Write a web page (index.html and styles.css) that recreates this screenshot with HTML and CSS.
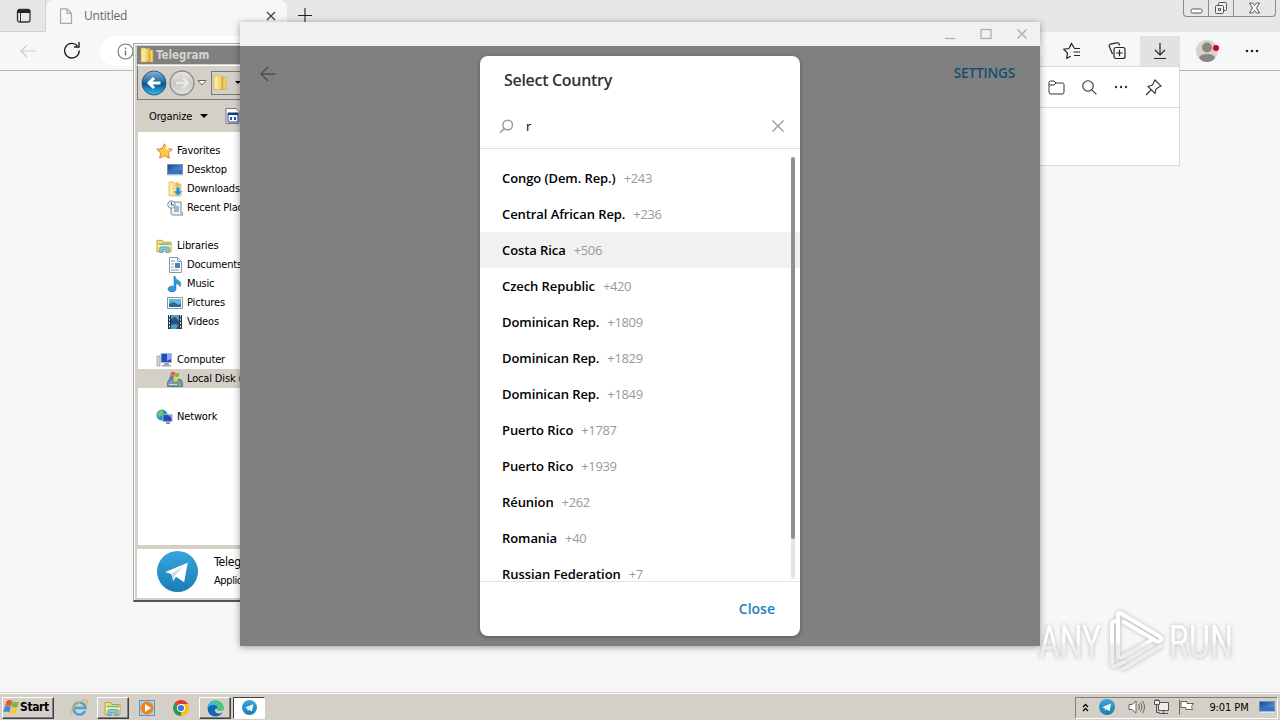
FILE: index.html
```html
<!DOCTYPE html>
<html lang="en">
<head>
    <meta charset="UTF-8">
    <meta name="viewport" content="width=device-width, initial-scale=1.0">
    <title>Untitled</title>
    <link rel="stylesheet" href="styles.css">
</head>
<body>
    <svg width="0" height="0" class="defs">
        <defs>
            <linearGradient id="blue" x1="0" y1="0" x2="0" y2="1"><stop offset="0" stop-color="#37a6dc"/><stop offset="1" stop-color="#1b7cb8"/></linearGradient>
            <linearGradient id="gold" x1="0" y1="0" x2="1" y2="0"><stop offset="0" stop-color="#f7e58c"/><stop offset="1" stop-color="#dba928"/></linearGradient>
            <linearGradient id="screen" x1="0" y1="0" x2="1" y2="1"><stop offset="0" stop-color="#163f9a"/><stop offset="1" stop-color="#6bb0ea"/></linearGradient>
            <linearGradient id="orb" x1="0" y1="0" x2="0" y2="1"><stop offset="0" stop-color="#8ab4d0"/><stop offset=".48" stop-color="#1d699f"/><stop offset=".52" stop-color="#07518b"/><stop offset="1" stop-color="#35c4f4"/></linearGradient>
            <linearGradient id="orb-off" x1="0" y1="0" x2="0" y2="1"><stop offset="0" stop-color="#e8e7e3"/><stop offset=".5" stop-color="#c9c8c4"/><stop offset="1" stop-color="#e4e3df"/></linearGradient>
            <linearGradient id="mark" gradientUnits="userSpaceOnUse" x1="0" y1="0" x2="0" y2="68"><stop offset=".5" stop-color="#fff"/><stop offset=".58" stop-color="#ededed"/></linearGradient>
            <symbol id="telegram" viewBox="0 0 40 40">
                <circle cx="20" cy="20" r="20" fill="url(#blue)"/>
                <path d="M8 20.500 30 11.500 26.500 30.500 18.500 25 16 29.500 14 22.500Z" fill="#fff"/>
                <path d="m14 22.500 12-8-8.500 9.500-1.500 5.500Z" fill="#c5deec"/>
            </symbol>
            <symbol id="folder" viewBox="0 0 16 16">
                <path d="M2 1h5v14H2z" fill="#f8e99b" stroke="#d0a93c" stroke-width=".6"/>
                <path d="M7 2 11 1v13l-4 1z" fill="url(#gold)"/>
                <path d="M11 3h3v12H8l3-1z" fill="#f1d566" stroke="#c99a25" stroke-width=".5"/>
            </symbol>
            <symbol id="library" viewBox="0 0 18 16">
                <path d="M1 2h6l1 2h8v10H1z" fill="#f4df7f" stroke="#c6a23d"/>
                <path d="M3 5h12v4H3z" fill="#76c796"/><path d="M2 7h14v2H2z" fill="#fff3ae"/>
                <path d="M4 15v-4q0-2 2-2h6q2 0 2 2v4h-3v-3H7v3z" fill="#83c9e8" stroke="#458eb3" stroke-width=".7"/>
            </symbol>
            <symbol id="monitor" viewBox="0 0 16 14">
                <path d="M.5 1.500h15v10H.5z" fill="url(#screen)" stroke="#7592ad"/>
                <path d="M1 10q7-4 14-3v4H1z" fill="#3772bd"/><path d="M1 11.500h14V13H1z" fill="#d6e8f5"/>
            </symbol>
            <symbol id="windows" viewBox="0 0 16 16">
                <path d="M3 2q3-2 6 0L7.500 7.500q-3-2-6 0z" fill="#e8592b"/><path d="M9.500 2.500q3 1.500 6 0L14 8q-3 1.500-6-.5z" fill="#80b936"/>
                <path d="M1.200 8q3-2 6 0L5.700 13.500q-3-2-6 0z" fill="#4486d5"/><path d="M7.700 8.500q3 2 6 .5l-1.500 5.500q-3 1.500-6-.5z" fill="#f7ca35"/>
            </symbol>
        </defs>
    </svg>

    <main class="browser">
        <div class="tab-bar">
            <div class="tab-actions">
                <svg width="16" height="16" viewBox="0 0 16 16"><rect x="1.500" y="1.500" width="12.500" height="12.500" rx="2" fill="none" stroke="#333" stroke-width="1.300"/><path d="M1.500 3.500h12.500" stroke="#222" stroke-width="3"/><path d="M4.500 5v9" stroke="#333"/></svg>
            </div>
            <div class="tab">
                <svg width="14" height="16" viewBox="0 0 14 16"><path d="M1.500.8h6.500l4.500 4.500v10H1.500zM8 .8v4.500h4.500" fill="none" stroke="#aaa" stroke-width="1.200"/></svg>
                <span>Untitled</span>
                <svg class="tab-close" width="10" height="10" viewBox="0 0 10 10"><path d="m1 1 8 8m0-8L1 9" stroke="#444" stroke-width="1.400"/></svg>
            </div>
            <svg class="new-tab" width="14" height="14" viewBox="0 0 14 14"><path d="M7 0v14M0 7.500h14" stroke="#222" stroke-width="1.100"/></svg>
            <div class="caption-buttons">
                <span><svg width="13" height="6" viewBox="0 0 13 6"><rect x="1" y="1" width="11" height="4" rx="1.500" fill="#fff" stroke="#555"/></svg></span>
                <span><svg width="14" height="14" viewBox="0 0 14 14" fill="#eee" stroke="#555"><rect x="4.500" y="1.500" width="8" height="8" rx="1"/><rect x="1.500" y="4.500" width="8" height="8" rx="1"/><path d="M4.500 7.500h2v2h-2z"/></svg></span>
                <span><svg width="13" height="12" viewBox="0 0 13 12"><path d="M1.500 1h3l2 2.500 2-2.500h3l-3 5 3 5h-3l-2-2.500-2 2.500h-3l3-5z" fill="#fff" stroke="#555"/></svg></span>
            </div>
        </div>
        <div class="toolbar">
            <svg class="back" width="18" height="14" viewBox="0 0 18 14"><path d="M17 7H2M8 1 2 7l6 6" fill="none" stroke="#ccc" stroke-width="1.200"/></svg>
            <svg class="reload" width="18" height="18" viewBox="0 0 18 18"><path d="M16.200 8.500A7.300 7.300 0 1 1 14.500 4M16 0v5h-5" fill="none" stroke="#222" stroke-width="1.400"/></svg>
            <div class="address">
                <svg width="17" height="17" viewBox="0 0 17 17"><circle cx="8.500" cy="8.500" r="7.500" fill="none" stroke="#777" stroke-width="1.100"/><path d="M8.500 7.500v5M8.500 4.500v1.500" stroke="#666" stroke-width="1.300"/></svg>
            </div>
            <div class="tools">
                <span><svg width="18" height="18" viewBox="0 0 18 18" fill="none" stroke="#222" stroke-width="1.200"><path d="M11.500 6.500 8.500 1.500 6 6.500.8 7.200l3.700 4-.7 5 4-2M11.500 6.500H17M10.500 10H17M11 13.500h6"/></svg></span>
                <span><svg width="18" height="18" viewBox="0 0 18 18" fill="none" stroke="#222" stroke-width="1.200"><path d="M4.500 12 1.200 4.200q-.4-1.500 1-2L9 .8q1.500-.3 2 1l.5 1.700"/><rect x="6" y="5.500" width="11" height="11" rx="2"/><path d="M11.500 7.800v6.400M8.300 11h6.400"/></svg></span>
                <span class="active"><svg width="14" height="18" viewBox="0 0 14 18" fill="none" stroke="#222" stroke-width="1.200"><path d="M7 1v12M2 8l5 5 5-5M1 16.500h12"/></svg></span>
                <span><svg width="24" height="24" viewBox="0 0 24 24"><circle cx="12" cy="12" r="11" fill="#d6d3d1"/><circle cx="12" cy="8.500" r="5" fill="#8a8785"/><path d="M4 19q1-4 8-4t8 4q-3 4-8 4t-8-4" fill="#8a8785"/><circle cx="21" cy="9" r="3" fill="#d7000f"/></svg></span>
                <span><svg width="14" height="4" viewBox="0 0 14 4" fill="#222"><circle cx="2" cy="2" r="1.300"/><circle cx="7" cy="2" r="1.300"/><circle cx="12" cy="2" r="1.300"/></svg></span>
            </div>
        </div>
    </main>

    <section class="downloads">
        <div class="downloads-bar">
            <svg width="17" height="15" viewBox="0 0 17 15" fill="none" stroke="#333"><path d="M1 12V2.500Q1 1 2.500 1H6l2 2h6.500Q16 3 16 4.500V12q0 2-2 2H3q-2 0-2-2ZM1 5h5l2-2"/></svg>
            <svg width="15" height="15" viewBox="0 0 15 15" fill="none" stroke="#333" stroke-width="1.100"><circle cx="6" cy="6" r="5.200"/><path d="m9.800 9.800 4.600 4.600"/></svg>
            <svg width="14" height="4" viewBox="0 0 14 4" fill="#333"><circle cx="2" cy="2" r="1.200"/><circle cx="7" cy="2" r="1.200"/><circle cx="12" cy="2" r="1.200"/></svg>
            <svg width="17" height="17" viewBox="0 0 17 17" fill="none" stroke="#333" stroke-width="1.100"><path d="m10 1 6 6-2 1-3 2-1 4.500L3 7.500 7.500 6 9 3ZM6 11l-5 5"/></svg>
        </div>
    </section>

    <section class="explorer">
        <div class="explorer-title"><svg width="16" height="16"><use href="#folder"/></svg>Telegram</div>
        <div class="explorer-nav">
            <svg width="26" height="26" viewBox="0 0 26 26"><circle cx="13" cy="13" r="12" fill="url(#orb)" stroke="#345b75"/><path d="M19.500 13H8m5-5-5 5 5 5" fill="none" stroke="#fff" stroke-width="3"/></svg>
            <svg width="26" height="26" viewBox="0 0 26 26"><circle cx="13" cy="13" r="12" fill="url(#orb-off)" stroke="#8d8d8a" stroke-width="1.300"/><path d="M7 13h12m-5-5 5 5-5 5" fill="none" stroke="#e9e8e5" stroke-width="2.500"/></svg>
            <svg class="nav-drop" width="10" height="6" viewBox="0 0 10 6"><path d="M1 .5h8l-4 4.500z" fill="#fff" stroke="#666"/></svg>
            <div class="path"><svg width="16" height="17"><use href="#folder"/></svg><i class="caret"></i></div>
        </div>
        <div class="explorer-tools">
            <span>Organize</span><i class="caret"></i>
            <svg width="15" height="16" viewBox="0 0 15 16"><path d="M1 .5h10l3 3v12H1z" fill="#fff" stroke="#777"/><path d="M3 5h10v9H3z" fill="#fff" stroke="#113d86"/><path d="M3 5h10v2H3z" fill="#113d86"/><path d="M5 9h2v3H5zM9 9h2v3H9z" fill="#24539b"/></svg>
        </div>
        <div class="tree">
            <div class="node"><svg width="17" height="16" viewBox="0 0 17 16"><path d="m8.500.8 2.400 4.700 5.400.8-4 3.700 1 5.200-4.800-2.500-4.800 2.500 1-5.200-4-3.700 5.400-.8z" fill="#ffc94a" stroke="#dc842a"/><path d="m8.500 3 1.300 3.800H14" fill="#fff4bd"/></svg>Favorites</div>
            <div class="node sub"><svg width="16" height="14"><use href="#monitor"/></svg>Desktop</div>
            <div class="node sub"><svg width="16" height="16" viewBox="0 0 16 16"><use href="#folder"/><path d="M9 6h4v4h3l-5 5-5-5h3z" fill="#2d91d6" stroke="#fff" stroke-width=".5"/></svg>Downloads</div>
            <div class="node sub"><svg width="16" height="16" viewBox="0 0 16 16"><path d="M4 2h10v11h2v2H6q-2 0-2-2z" fill="#edf4f7" stroke="#75899b"/><path d="M7 7h5M7 9h5M7 11h5" stroke="#577e98"/><circle cx="4.500" cy="4.500" r="3.800" fill="#e6f2f6" stroke="#8198a7"/><path d="M4.500 2v3H7" fill="none" stroke="#557"/></svg>Recent Places</div>
            <div class="node group"><svg width="17" height="16"><use href="#library"/></svg>Libraries</div>
            <div class="node sub"><svg width="16" height="16" viewBox="0 0 16 16"><path d="M2.500.5h8l4 4v11h-12z" fill="#fff" stroke="#8596a8"/><path d="M10.500.5v4h4M4 4h4M4 7h3M4 10h3M4 13h8" fill="none" stroke="#789ac1"/><path d="M8 6h5v5H8z" fill="#4f7db3"/></svg>Documents</div>
            <div class="node sub"><svg width="16" height="16" viewBox="0 0 16 16"><path d="M8 0q0 3 3.500 4.500T13 11q0-3-4-3.500V13a4 3 0 1 1-2-2.500V0z" fill="#2f97da" stroke="#1b6faf" stroke-width=".5"/></svg>Music</div>
            <div class="node sub"><svg width="16" height="14" viewBox="0 0 16 14"><path d="M.5 1.500h15v11H.5z" fill="#fff" stroke="#8496a6"/><path d="M2 3h12v8H2z" fill="#65b4dc"/><path d="M2 8q4-3 7-.5T14 7v4H2z" fill="#286b8a"/></svg>Pictures</div>
            <div class="node sub"><svg width="16" height="16" viewBox="0 0 16 16"><path d="M1 1h14v14H1z" fill="#263745"/><path d="M4 1h8v6H4zM4 8h8v7H4z" fill="#5898c6"/><path d="M4 5 8 3l4 4v8H9l2-4-3-1-4 1z" fill="#28547b"/><path d="M2.500 1v14M13.500 1v14" stroke="#d6e2e8" stroke-dasharray="2 1.500"/></svg>Videos</div>
            <div class="node group"><svg width="17" height="16" viewBox="0 0 17 16"><path d="M1 4h3v10H1z" fill="#d5dbe2" stroke="#78818c" stroke-width=".6"/><path d="M5 1.500h10.500v9H5z" fill="#2548c8" stroke="#a6b4ca"/><path d="M11 2h4v5l-4 2z" fill="#81adf3"/><path d="M8 11h5v2h2v1.500H6V13h2z" fill="#9ba5b4"/></svg>Computer</div>
            <div class="node sub selected"><svg width="16" height="16" viewBox="0 0 16 16"><path d="M2 8.500h12l1.500 3v4H.5v-4z" fill="#739baa" stroke="#45606c" stroke-width=".7"/><use href="#windows" x="2" width="11" height="11"/><path d="M2 13.500h8" stroke="#ccdce2"/><path d="M12 13.500h2" stroke="#54e66b"/></svg>Local Disk (C:)</div>
            <div class="node group"><svg width="17" height="16" viewBox="0 0 17 16"><circle cx="6" cy="6" r="5.500" fill="#2397bf"/><path d="M3 2q5-2 4 2T3 8q-3-3 0-6" fill="#6fca65"/><path d="M7 5.500h9v7H7z" fill="#2548c8" stroke="#a6b4ca"/><path d="M12 6h3.500v3z" fill="#81adf3"/><path d="M10 13h4v2h-4z" fill="#8995a2"/></svg>Network</div>
        </div>
        <div class="details">
            <svg width="41" height="41"><use href="#telegram"/></svg>
            <div><p>Telegram</p><p class="kind">Application</p></div>
        </div>
    </section>

    <section class="telegram">
        <div class="telegram-title">
            <svg width="12" height="12" viewBox="0 0 12 12"><path d="M1 10.500h10" stroke="#aaa" stroke-width="1.200"/></svg>
            <svg width="12" height="12" viewBox="0 0 12 12"><rect x="1" y="1.500" width="10" height="9" fill="none" stroke="#aaa" stroke-width="1.200"/></svg>
            <svg width="12" height="12" viewBox="0 0 12 12"><path d="m1.500 1.500 9 9m0-9-9 9" stroke="#aaa" stroke-width="1.200"/></svg>
        </div>
        <div class="telegram-body">
            <svg class="telegram-back" width="16" height="16" viewBox="0 0 16 16"><path d="M15.500 8H1M8 1 1 8l7 7" fill="none" stroke="#4d4d4d" stroke-width="1.400"/></svg>
            <div class="modal">
                <h2>Select Country</h2>
                <div class="search">
                    <svg width="15" height="15" viewBox="0 0 15 15" fill="none" stroke="#999" stroke-width="1.500"><circle cx="8.700" cy="6" r="4.800"/><path d="M5.200 9.600 1 13.800"/></svg>
                    <span>r</span>
                    <svg width="12" height="12" viewBox="0 0 12 12"><path d="m.5.5 11 11m0-11-11 11" stroke="#999" stroke-width="1.300"/></svg>
                </div>
                <div class="countries">
                    <div class="country"><b>Congo (Dem. Rep.)</b><span>+243</span></div>
                    <div class="country"><b>Central African Rep.</b><span>+236</span></div>
                    <div class="country hover"><b>Costa Rica</b><span>+506</span></div>
                    <div class="country"><b>Czech Republic</b><span>+420</span></div>
                    <div class="country"><b>Dominican Rep.</b><span>+1809</span></div>
                    <div class="country"><b>Dominican Rep.</b><span>+1829</span></div>
                    <div class="country"><b>Dominican Rep.</b><span>+1849</span></div>
                    <div class="country"><b>Puerto Rico</b><span>+1787</span></div>
                    <div class="country"><b>Puerto Rico</b><span>+1939</span></div>
                    <div class="country"><b>Réunion</b><span>+262</span></div>
                    <div class="country"><b>Romania</b><span>+40</span></div>
                    <div class="country"><b>Russian Federation</b><span>+7</span></div>
                    <div class="scrollbar"><i></i></div>
                </div>
                <div class="modal-footer"><span>Close</span></div>
            </div>
            <span class="settings">SETTINGS</span>
        </div>
    </section>

    <svg class="watermark" width="204" height="68" viewBox="0 0 204 68">
        <g class="mark-text">
            <text x="5" y="51" textLength="62" lengthAdjust="spacingAndGlyphs">ANY</text>
            <text x="135" y="51" textLength="64" lengthAdjust="spacingAndGlyphs">RUN</text>
        </g>
        <path class="mark-line" d="M82 14q-4 0-4 4v38q0 5 4 3l8-4M84 47V9q0-5 4-2l37 22q4 3 1 5l-2 1-34-20M84 47q0 5 4 3l30-17M89 62l38-23"/>
    </svg>

    <footer class="taskbar">
        <div class="start"><svg width="17" height="16"><use href="#windows"/></svg>Start</div>
        <div class="apps">
            <span><svg width="18" height="18" viewBox="0 0 18 18" fill="none"><path d="M15 12a6 6 0 1 1 .5-3H4" stroke="#4ba3dc" stroke-width="2.600"/><path d="M1 16C-1 11 12-2 17 2q1 1-1 4" stroke="#e9b93b" stroke-width="1.300"/></svg></span>
            <span class="raised"><svg width="18" height="17"><use href="#library"/></svg></span>
            <span><svg width="16" height="16" viewBox="0 0 16 16"><path d="M.5.5h15v15H.5z" fill="#a9d0ec" stroke="#5a98c4"/><circle cx="8" cy="8" r="6.500" fill="#f18418"/><path d="m6 4 6 4-6 4z" fill="#fff"/></svg></span>
            <span><svg width="16" height="16" viewBox="0 0 16 16"><path d="M8 8 1.100 4A8 8 0 0 1 15 4z" fill="#e33b2e"/><path d="M8 8 1.100 4A8 8 0 0 0 8 16l3.500-6z" fill="#239b50"/><path d="M8 8V4h7a8 8 0 0 1-7 12z" fill="#fbc116"/><circle cx="8" cy="8" r="4" fill="#fff"/><circle cx="8" cy="8" r="3.100" fill="#3c79dc"/></svg></span>
            <span class="raised"><svg width="17" height="17" viewBox="0 0 17 17"><circle cx="8.500" cy="8.500" r="8" fill="#1269b8"/><path d="M.5 8Q1 .5 8.500.5t8 7q0 3.500-4 3.500-3 0-2-2 .5-4-4-4T.5 8" fill="#38bfd0"/><path d="M9 .5q7.500.5 7.500 7 0 3.500-4 3.500-3 0-2-2Q11 4 7 2" fill="#4cc77c"/><path d="M10.500 9q-1 2 2 2 2 0 3.500-1v2q-2 2-5 1.500T8 10q0-2 2.500-1" fill="#d4d0c8"/></svg></span>
            <span class="pressed"><svg width="15" height="15"><use href="#telegram"/></svg></span>
        </div>
        <div class="tray">
            <svg width="7" height="9" viewBox="0 0 7 9"><path d="m1 4 2.500-2.500L6 4M1 8l2.500-2.500L6 8" fill="none" stroke="#000" stroke-width="1.300"/></svg>
            <svg class="tray-telegram" width="16" height="16"><use href="#telegram"/></svg>
            <svg width="17" height="16" viewBox="0 0 17 16" fill="#fff" stroke="#666"><path d="M1 5.500h3L8 2v12l-4-3.500H1z"/><path d="M10.500 5q2 3 0 6M12.500 3.500q3 4.500 0 9M14.500 2q4 6 0 12" fill="none"/></svg>
            <svg width="17" height="16" viewBox="0 0 17 16" fill="#eee" stroke="#555"><path d="M5.500 3.500h10v8h-10z"/><path d="M6 14.500h9M10.500 11.500v3"/><path d="M3.500 5.500v8h3" fill="none"/><path d="M1.500 1.500h5v4h-5zM3 0v2M5 0v2"/></svg>
            <svg width="17" height="16" viewBox="0 0 17 16" fill="#fff" stroke="#666"><path d="M1.500.5v15M3 2.500h6v2h6.500l-2 3 1 3H8v-2H3z"/></svg>
            <time>9:01 PM</time>
            <svg width="16" height="14"><use href="#monitor"/></svg>
        </div>
    </footer>
</body>
</html>
```
FILE: styles.css
```css
* {
    box-sizing: border-box;
}
body {
    margin: 0;
    width: 1280px;
    height: 720px;
    position: relative;
    overflow: hidden;
    display: flex;
    flex-direction: column;
    background: #f7f7f7;
    font-family: "Open Sans", sans-serif;
}
svg {
    display: block;
    flex: none;
}
p, h2 {
    margin: 0;
}
.defs {
    position: absolute;
}

/* Browser */
.browser {
    flex: 1;
}
.tab-bar {
    height: 32px;
    display: flex;
    background: #e7e7e7;
}
.tab-actions {
    width: 46px;
    padding: 8px 0 0 16px;
    border-bottom: 1px solid #d2d2d2;
    border-right: 1px solid #d2d2d2;
}
.tab {
    width: 241px;
    padding: 0 11px 0 13px;
    display: flex;
    align-items: center;
    background: #f7f7f7;
    border-radius: 7px 7px 0 0;
    color: #666;
}
.tab span {
    margin: -2px 0 0 11px;
    font-size: 12px;
    letter-spacing: -.2px;
}
.tab-close {
    margin-left: auto;
}
.new-tab {
    margin: 8px 0 0 11px;
}
.caption-buttons {
    display: flex;
    width: 93px;
    height: 17px;
    margin-left: auto;
    margin-right: 4px;
    border: 1px solid #8b8b8b;
    border-top: 0;
    border-radius: 0 0 4px 4px;
}
.caption-buttons span {
    flex: 0 0 25px;
    display: flex;
    align-items: center;
    justify-content: center;
    border-right: 1px solid #8b8b8b;
}
.caption-buttons span:first-child {
    padding-top: 5px;
}
.caption-buttons span:last-child {
    flex: 1;
    border: 0;
}
.toolbar {
    height: 39px;
    display: flex;
    align-items: center;
    padding-left: 19px;
    background: #f7f7f7;
    border-bottom: 1px solid #b5b5b5;
}
.reload {
    margin-left: 26px;
}
.address {
    width: 943px;
    height: 30px;
    margin-left: 19px;
    padding: 7px 17px;
    border-radius: 15px;
    background: #fff;
}
.tools {
    display: flex;
    height: 100%;
    margin-left: 6px;
}
.tools span {
    width: 45px;
    display: flex;
    justify-content: center;
    align-items: center;
}
.tools .active {
    width: 40px;
    margin: 4px 0 0 1px;
    padding-bottom: 4px;
    background: #e2e2e2;
}
.tools span:nth-child(4) {
    width: 53px;
}
.tools span:last-child {
    width: 38px;
}
.downloads {
    position: absolute;
    left: 1000px;
    top: 66px;
    width: 180px;
    height: 100px;
    background: #fff;
    border: 1px solid #d9d9d9;
}
.downloads-bar {
    display: flex;
    height: 41px;
    padding: 0 17px 0 47px;
    align-items: center;
    justify-content: space-between;
    border-bottom: 1px solid #dedede;
}

/* File explorer */
.explorer {
    position: absolute;
    left: 133px;
    top: 43px;
    width: 500px;
    height: 559px;
    display: flex;
    flex-direction: column;
    padding: 2px 3px;
    background: #d4d0c8;
    border: 1px solid #aaa8a3;
    border-bottom: 2px solid #555;
    box-shadow: inset 1px 1px #fff;
    font-family: "DejaVu Sans Condensed", "DejaVu Sans", sans-serif;
    font-size: 11px;
    letter-spacing: -.15px;
}
.explorer-title {
    height: 18px;
    display: flex;
    align-items: center;
    gap: 1px;
    padding-left: 2px;
    background: #808080;
    color: #d8d4cc;
    font-weight: bold;
    font-size: 11.500px;
    letter-spacing: 0;
}
.explorer-nav {
    height: 35px;
    margin-top: 1px;
    display: flex;
    align-items: center;
    padding-left: 3px;
    gap: 2px;
    border: 1px solid #777;
    border-top-color: #fff;
    background: #d4cfc7;
}
.path {
    height: 24px;
    width: 300px;
    display: flex;
    align-items: center;
    margin-left: 2px;
    border: 1px solid #777;
}
.caret {
    border: 4px solid transparent;
    border-top-color: #000;
    border-bottom: 0;
}
.path .caret {
    border-width: 3px;
    border-bottom: 0;
    margin-left: 7px;
}
.explorer-tools {
    height: 32px;
    display: flex;
    align-items: center;
    padding-left: 12px;
}
.explorer-tools .caret {
    margin-left: 8px;
}
.explorer-tools svg {
    margin-left: 17px;
}
.tree {
    flex: 1;
    padding-top: 9px;
    background: #fff;
    border-left: 1px solid #d4d0c8;
}
.node {
    height: 19px;
    display: flex;
    align-items: center;
    gap: 4px;
    padding-left: 18px;
    white-space: nowrap;
}
.sub {
    padding-left: 29px;
}
.group {
    margin-top: 19px;
}
.selected {
    background: #d4d0c8;
}
.details {
    height: 49px;
    margin-top: 4px;
    display: flex;
    gap: 16px;
    padding: 2px 0 0 20px;
    background: #fff;
}
.details p {
    margin-top: 4px;
    font-size: 12px;
    line-height: 14px;
}
.details .kind {
    margin-top: 5px;
    font-size: 11px;
    letter-spacing: -.4px;
}

/* Telegram */
.telegram {
    position: absolute;
    left: 240px;
    top: 22px;
    width: 800px;
    height: 624px;
    background: #808080;
    box-shadow: 0 1px 7px rgba(0, 0, 0, .38);
}
.telegram-title {
    height: 24px;
    display: flex;
    justify-content: flex-end;
    align-items: center;
    gap: 24px;
    padding-right: 12px;
    background: #f1f1f1;
}
.telegram-body {
    display: flex;
    justify-content: space-between;
    padding: 10px 25px 0 20px;
}
.telegram-back {
    margin: 10px 29px 0 0;
}
.settings {
    margin-top: 8px;
    color: #104f73;
    font-size: 13.500px;
    font-weight: 600;
    letter-spacing: -.1px;
    line-height: 18px;
}
.modal {
    position: absolute;
    left: 240px;
    top: 34px;
    width: 320px;
    height: 580px;
    display: flex;
    flex-direction: column;
    border-radius: 8px;
    background: #fff;
    box-shadow: 0 1px 4px rgba(0, 0, 0, .35);
    overflow: hidden;
}
.modal h2 {
    height: 48px;
    padding-left: 24px;
    color: #333;
    font-size: 16px;
    font-weight: 600;
    letter-spacing: -.3px;
    line-height: 48px;
}
.search {
    height: 45px;
    padding: 0 16px 0 19px;
    display: flex;
    align-items: center;
    border-bottom: 1px solid #e1e1e1;
    font-size: 13px;
}
.search span {
    flex: 1;
    margin-left: 12px;
}
.countries {
    position: relative;
    height: 432px;
    padding-top: 11px;
    overflow: hidden;
}
.country {
    height: 36px;
    display: flex;
    align-items: center;
    gap: 8px;
    padding-left: 22px;
    font-size: 13px;
    white-space: nowrap;
}
.country b {
    font-weight: 600;
    letter-spacing: -.08px;
}
.country span {
    color: #999;
    letter-spacing: -.35px;
}
.country.hover {
    background: #f1f1f1;
}
.scrollbar {
    position: absolute;
    top: 8px;
    right: 5px;
    width: 4px;
    height: 422px;
    border-radius: 2px;
    background: rgba(0, 0, 0, .1);
}
.scrollbar i {
    display: block;
    height: 382px;
    border-radius: 2px;
    background: #909090;
}
.modal-footer {
    flex: 1;
    display: flex;
    justify-content: flex-end;
    align-items: center;
    padding: 0 25px 2px 0;
    border-top: 1px solid #e4e4e4;
    color: #1f83b8;
    font-size: 14px;
    font-weight: 600;
}

.watermark {
    position: absolute;
    left: 1034px;
    top: 607px;
    filter: drop-shadow(0 0 2px rgba(0, 0, 0, .25));
}
.mark-text {
    fill: url(#mark);
    font-family: Roboto, sans-serif;
    font-size: 46px;
}
.mark-line {
    fill: none;
    stroke: url(#mark);
    stroke-width: 4px;
    stroke-linejoin: round;
    stroke-linecap: round;
}

/* Taskbar */
.taskbar {
    height: 28px;
    display: flex;
    align-items: center;
    padding: 3px 2px 0 2px;
    background: #d4d0c8;
    border-top: 1px solid #d4d0c8;
    box-shadow: inset 0 1px #fff;
    font-family: "DejaVu Sans Condensed", "DejaVu Sans", sans-serif;
    font-size: 11px;
}
.start {
    width: 52px;
    height: 22px;
    display: flex;
    align-items: center;
    padding-bottom: 2px;
    border: 1px solid;
    border-color: #fff #404040 #404040 #fff;
    box-shadow: inset -1px -1px #808080;
    font-weight: bold;
    font-size: 12px;
    letter-spacing: -.4px;
}
.apps {
    display: flex;
    margin-left: 9px;
}
.apps span {
    width: 32px;
    height: 22px;
    margin-right: 2px;
    display: flex;
    align-items: center;
    justify-content: center;
}
.apps .raised {
    border: 1px solid;
    border-color: #fff #404040 #404040 #fff;
    box-shadow: inset -1px -1px #808080;
}
.apps .pressed {
    padding-bottom: 2px;
    border: 1px solid;
    border-color: #404040 #fff #fff #404040;
    background: #fff;
}
.tray {
    width: 203px;
    height: 22px;
    margin-left: auto;
    padding: 0 2px 2px 6px;
    display: flex;
    align-items: center;
    border: 1px solid;
    border-color: #808080 #fff #fff #808080;
}
.tray svg + svg {
    margin-left: 8px;
}
.tray .tray-telegram {
    margin: 0 5px 0 10px;
}
.tray time {
    margin: 0 auto;
    padding-left: 4px;
    white-space: nowrap;
    letter-spacing: -.1px;
}
```
